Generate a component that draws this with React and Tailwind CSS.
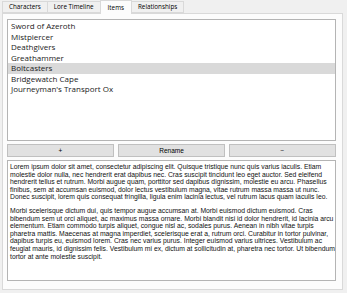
import React, { useState } from 'react'

const tabs = ['Characters', 'Lore Timeline', 'Items', 'Relationships']

const items = [
  'Sword of Azeroth',
  'Mistpiercer',
  'Deathgivers',
  'Greathammer',
  'Boltcasters',
  'Bridgewatch Cape',
  "Journeyman's Transport Ox",
]

// lines kept as the editor wrapped them
const paragraphs = [
  [
    'Lorem ipsum dolor sit amet, consectetur adipiscing elit. Quisque tristique nunc quis varius iaculis. Etiam',
    'molestie dolor nulla, nec hendrerit erat dapibus nec. Cras suscipit tincidunt leo eget auctor. Sed eleifend',
    'hendrerit tellus et rutrum. Morbi augue quam, porttitor sed dapibus dignissim, molestie eu arcu. Phasellus',
    'finibus, sem at accumsan euismod, dolor lectus vestibulum magna, vitae rutrum massa massa ut nunc.',
    'Donec suscipit, lorem quis consequat fringilla, ligula enim lacinia lectus, vel rutrum lacus quam iaculis leo.',
  ],
  [
    'Morbi scelerisque dictum dui, quis tempor augue accumsan at. Morbi euismod dictum euismod. Cras',
    'bibendum sem ut orci aliquet, ac maximus massa ornare. Morbi blandit nisi id dolor hendrerit, id lacinia arcu',
    'elementum. Etiam commodo turpis aliquet, congue nisl ac, sodales purus. Aenean in nibh vitae turpis',
    'pharetra mattis. Maecenas at magna imperdiet, scelerisque erat a, rutrum orci. Curabitur in tortor pulvinar,',
    'dapibus turpis eu, euismod lorem. Cras nec varius purus. Integer euismod varius ultrices. Vestibulum ac',
    'feugiat mauris, id dignissim felis. Vestibulum mi ex, dictum at sollicitudin at, pharetra nec tortor. Ut bibendum',
    'tortor at ante molestie suscipit.',
  ],
]

function App() {
  const [tab, setTab] = useState('Items')
  const [selected, setSelected] = useState('Boltcasters')

  return (
    <div className="h-[293px] w-[347px] bg-[#f0f0f0] pl-[2px] pr-[4px] pb-[3px] font-['Open_Sans',sans-serif] text-black">
      <div className="flex h-[13px] items-end">
        {tabs.map(t => (
          <button
            key={t}
            onClick={() => setTab(t)}
            className={
              t === tab
                ? 'relative z-10 -mb-px -ml-px h-[14px] border border-b-0 border-[#d9d9d9] bg-[#fcfcfc] px-[7px] text-[6.3px] leading-[12px]'
                : 'h-[12px] border border-[#d9d9d9] bg-[#f0f0f0] px-[6px] text-[6.3px] leading-[10px] -ml-px first:ml-0'
            }
          >
            {t}
          </button>
        ))}
      </div>
      <div className="flex h-[277px] flex-col border border-[#d9d9d9] bg-[#fcfcfc] pl-[4px] pr-[6px] pt-[5px]">
        <div className="h-[122px] border border-[#b4b4b4] bg-white pt-[1px]">
          {items.map(it => (
            <div
              key={it}
              onClick={() => setSelected(it)}
              className={(it === selected ? 'bg-[#d9d9d9] ' : '') + 'h-[10.5px] pl-[3px] text-[8px] leading-[10.5px] text-[#1a1a1a]'}
            >
              {it}
            </div>
          ))}
        </div>
        <div className="mt-[3px] grid h-[13px] grid-cols-3 gap-[4px] font-['Liberation_Sans',sans-serif] text-[6.5px]">
          <button className="border border-[#c0c0c0] bg-[#e1e1e1]">+</button>
          <button className="border border-[#c0c0c0] bg-[#e1e1e1]">Rename</button>
          <button className="border border-[#c0c0c0] bg-[#e1e1e1]">−</button>
        </div>
        <div className="mt-[3px] h-[121px] overflow-hidden border border-[#b4b4b4] bg-white px-[2px] pt-[2px] font-['Liberation_Sans',sans-serif] text-[6.8px] leading-[7.6px] text-[#111]">
          {paragraphs.map((lines, i) => (
            <div key={i} className="mb-[6px]">
              {lines.map((l, j) => (
                <div key={j} className="whitespace-nowrap">{l}</div>
              ))}
            </div>
          ))}
        </div>
      </div>
    </div>
  )
}

export default App
